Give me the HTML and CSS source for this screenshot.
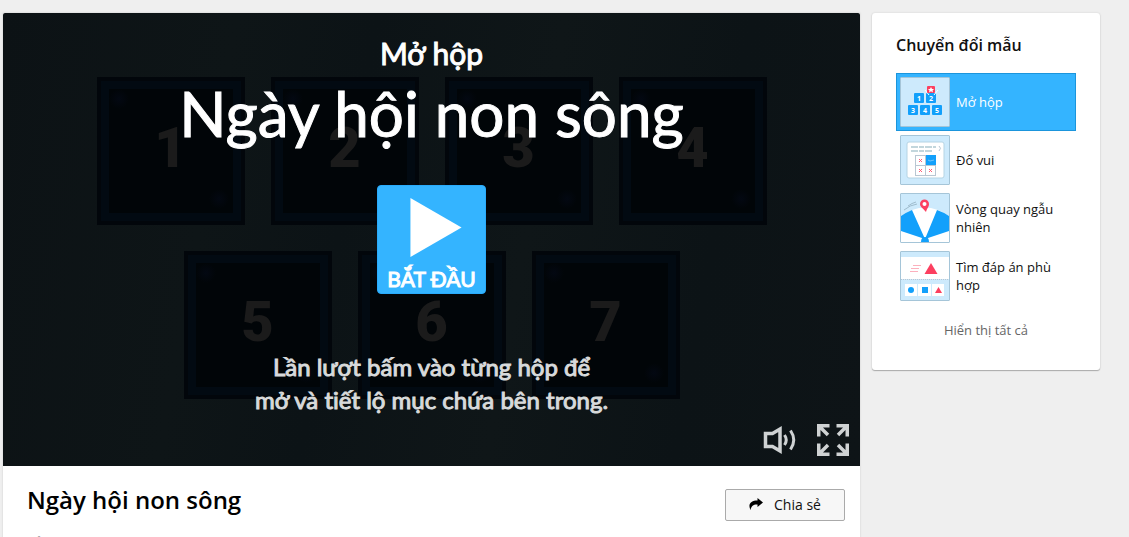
FILE: index.html
```
<!DOCTYPE html>
<html lang="vi">
  <head>
    <meta charset="UTF-8">
    <meta name="viewport" content="width=device-width, initial-scale=1.0">
    <title>Ngày hội non sông</title>
    <link rel="stylesheet" href="styles.css">
  </head>
  <body>
    <div class="page">
      <main class="activity">
        <section class="stage">
          <div class="boxes">
            <div class="box">1</div>
            <div class="box">2</div>
            <div class="box">3</div>
            <div class="box">4</div>
            <div class="box">5</div>
            <div class="box">6</div>
            <div class="box">7</div>
          </div>
          <div class="intro">
            <div class="template-name">Mở hộp</div>
            <div class="game-title">Ngày hội non sông</div>
            <button class="start" type="button">
              <svg width="52" height="60" viewBox="0 0 52 60"><path d="M0 0L52 30L0 60Z" fill="#fff"/></svg>
              <span>BẮT ĐẦU</span>
            </button>
            <p class="instruction">Lần lượt bấm vào từng hộp để<br>mở và tiết lộ mục chứa bên trong.</p>
          </div>
          <div class="controls">
            <button class="control" type="button" aria-label="Âm thanh">
              <svg width="34" height="32" viewBox="0 0 34 32" fill="none" stroke="#cfd2d3">
                <path d="M2.5 9.5H9.500L17 5V27L9.500 22.500H2.500Z" stroke-width="3.500"/>
                <path d="M21.500 11Q25 16 21.500 21M27.500 6.500Q34 16 27.500 25.500" stroke-width="3"/>
              </svg>
            </button>
            <button class="control" type="button" aria-label="Toàn màn hình">
              <svg width="32" height="32" viewBox="0 0 32 32" fill="none" stroke="#cfd2d3" stroke-width="3.500">
                <path d="M12.500 1.750H1.750V12.500M2 2L11 11"/>
                <path d="M19.500 1.750H30.250V12.500M30 2L21 11"/>
                <path d="M12.500 30.250H1.750V19.500M2 30L11 21"/>
                <path d="M19.500 30.250H30.250V19.500M30 30L21 21"/>
              </svg>
            </button>
          </div>
        </section>
        <section class="details">
          <div class="about">
            <h1>Ngày hội non sông</h1>
            <div class="author">bởi <a href="#">Vananh</a></div>
          </div>
          <button class="share" type="button">
            <svg width="14" height="12" viewBox="0 0 14 12"><path d="M8.500 0L14 4.500L8.500 9V6.500C4.500 6.300 2.500 7.500 1.500 12C-1.500 6 2 2.500 8.500 2.500Z" fill="#000"/></svg>
            Chia sẻ
          </button>
        </section>
      </main>

      <aside class="switcher">
        <h2>Chuyển đổi mẫu</h2>
        <nav class="templates">
          <a class="template selected" href="#">
            <svg class="thumb" viewBox="0 0 48 48">
              <rect width="48" height="48" fill="#cdeafc"/>
              <g fill="#12a0fb">
                <rect x="13" y="15" width="10" height="10" rx="1"/>
                <rect x="25" y="15" width="10" height="10" rx="1"/>
                <rect x="7" y="27" width="10" height="10" rx="1"/>
                <rect x="19" y="27" width="10" height="10" rx="1"/>
                <rect x="31" y="27" width="10" height="10" rx="1"/>
              </g>
              <path d="M24 12L28 17M37 12L33 17" stroke="#fff"/>
              <rect x="26" y="8" width="8" height="7" rx="1" fill="#fc3f5f"/>
              <path d="M30 9L31 11H33L31.500 12.500L32 14.500L30 13.300L28 14.500L28.500 12.500L27 11H29Z" fill="#fff"/>
              <g class="thumb-digits">
                <text x="18" y="23">1</text>
                <text x="30" y="23">2</text>
                <text x="12" y="35">3</text>
                <text x="24" y="35">4</text>
                <text x="36" y="35">5</text>
              </g>
            </svg>
            <span>Mở hộp</span>
          </a>
          <a class="template" href="#">
            <svg class="thumb" viewBox="0 0 48 48">
              <rect width="48" height="48" fill="#cdeafc"/>
              <rect x="6" y="6" width="37" height="36" rx="2" fill="#fff" stroke="#b5d4e4"/>
              <path d="M10 11H35M10 15H31" stroke="#c2d6dc" stroke-width="2" stroke-dasharray="7 1 5 1"/>
              <path d="M38 10Q41 12 38 15" stroke="#b9c7d3" fill="none"/>
              <rect x="14.500" y="19.500" width="20" height="20" fill="#fff" stroke="#b9c7d3"/>
              <path d="M24.500 20V39M15 29.500H34" stroke="#b9c7d3"/>
              <rect x="25" y="19" width="10" height="10" fill="#12a0fb"/>
              <path d="M27 24L29 25L33 24" stroke="#70c4fa" fill="none"/>
              <path d="M18 23L21 26M21 23L18 26M18 33L21 36M21 33L18 36M28 33L31 36M31 33L28 36" stroke="#fc5f78"/>
            </svg>
            <span>Đố vui</span>
          </a>
          <a class="template" href="#">
            <svg class="thumb" viewBox="0 0 48 48">
              <rect width="48" height="48" fill="#cdeafc"/>
              <path d="M0 22Q24 5 48 22V48H0Z" fill="#fff"/>
              <path d="M0 22Q6 18 11 16L24 45L0 37ZM48 22Q42 18 36 16L24 45L48 37Z" fill="#12a0fb"/>
              <path d="M20 48Q20 43 24 43Q28 43 28 48Z" fill="#12a0fb"/>
              <path d="M3 16Q9 11 16 10M7 12Q11 9 15 8" stroke="#9fbccd" fill="none"/>
              <path d="M25 18C22 14 19 13 19 10A4.500 4.500 0 0 1 28 10C28 13 26 14 25 18Z" fill="#fc3f5f"/>
              <circle cx="23.500" cy="10" r="2" fill="#fff"/>
            </svg>
            <span>Vòng quay ngẫu nhiên</span>
          </a>
          <a class="template" href="#">
            <svg class="thumb" viewBox="0 0 48 48">
              <rect width="48" height="48" fill="#cdeafc"/>
              <rect y="5" width="48" height="22" fill="#fff"/>
              <path d="M0 27.500H48" stroke="#b9c7d3" stroke-dasharray="1 1"/>
              <path d="M30 11L36.500 22H23.500Z" fill="#fc3f5f"/>
              <path d="M12 13.500H20M10 16.500H18M9 19.500H17" stroke="#fcb0bd"/>
              <path d="M4 32H16V44H4ZM17 32H30V44H17ZM31 32H43V44H31Z" fill="#fff"/>
              <circle cx="10" cy="38" r="3" fill="#12a0fb"/>
              <rect x="21" y="35" width="6" height="6" fill="#12a0fb"/>
              <path d="M37.500 35L41 41H34Z" fill="#fc3f5f"/>
            </svg>
            <span>Tìm đáp án phù hợp</span>
          </a>
        </nav>
        <a class="show-all" href="#">Hiển thị tất cả</a>
      </aside>
    </div>
  </body>
</html>
```
FILE: styles.css
```
* {
  box-sizing: border-box;
}
body {
  margin: 0;
  background-color: #efefef;
  font-family: "Open Sans", "Noto Sans", sans-serif;
  color: #111;
}
a {
  color: inherit;
  text-decoration: none;
}
button {
  font-family: inherit;
  cursor: pointer;
}
svg {
  display: block;
}
.page {
  display: flex;
  align-items: flex-start;
  gap: 12px;
  padding: 13px 29px 0 3px;
  height: 100vh;
  overflow: hidden;
}
.activity {
  flex: 1;
  background-color: #fff;
  box-shadow: 0 0 2px #ccc;
}

/* game area */
.stage {
  position: relative;
  display: grid;
  padding-bottom: 50px;
  background: linear-gradient(100deg, #0c1215, #0e1517 25%, #0c1316 40%, #0f1618 60%, #0c1316 80%, #0e1417);
  border-radius: 2px 2px 0 0;
}
.boxes,
.intro {
  grid-area: 1 / 1;
}
.boxes {
  display: flex;
  flex-wrap: wrap;
  justify-content: center;
  align-content: flex-start;
  gap: 26px;
  padding: 64px 90px 0;
}
.box {
  display: flex;
  align-items: center;
  justify-content: center;
  width: 148px;
  height: 148px;
  border: 4px solid #02060b;
  background:
    radial-gradient(circle at 18px 18px, #030812, transparent 10px),
    radial-gradient(circle at 118px 118px, #030812, transparent 10px),
    #010508;
  box-shadow: inset 0 0 0 8px #020a12;
  color: #1b1b1b;
  font-family: Roboto, sans-serif;
  font-size: 56px;
  font-weight: 900;
  line-height: 60px;
  padding-bottom: 6px;
}
.intro {
  z-index: 1;
  display: flex;
  flex-direction: column;
  align-items: center;
  padding-top: 20px;
  color: #fff;
  font-family: Lato, sans-serif;
  font-variant-ligatures: none;
  text-align: center;
  -webkit-text-stroke: 1px;
}
.template-name {
  font-size: 30px;
  line-height: 40px;
}
.game-title {
  font-size: 62px;
  line-height: 80px;
}
.start {
  display: flex;
  flex-direction: column;
  align-items: center;
  gap: 8px;
  width: 109px;
  height: 109px;
  margin-top: 32px;
  padding: 12px 0 0;
  border: 1px solid #29abfb;
  border-radius: 4px;
  background-color: #34b4ff;
  color: #fff;
  font-size: 21px;
  line-height: 28px;
}
.start svg {
  margin-left: 8px;
}
.instruction {
  margin: 56px 0 0;
  color: #d8dadb;
  font-size: 24px;
  line-height: 33px;
}
.controls {
  position: absolute;
  right: 11px;
  bottom: 10px;
  z-index: 2;
  display: flex;
  gap: 20px;
}
.control {
  padding: 0;
  border: 0;
  background: none;
}

/* title and share */
.details {
  display: flex;
  justify-content: space-between;
  align-items: flex-start;
  padding: 16px 15px 24px 24px;
}
.details h1 {
  margin: 0;
  color: #000;
  font-size: 24px;
  font-weight: 600;
  line-height: 36px;
}
.author {
  margin-top: 14px;
  color: #777;
  font-size: 13px;
  line-height: 20px;
}
.author a {
  color: #1483c4;
}
.share {
  display: flex;
  align-items: center;
  justify-content: center;
  gap: 11px;
  width: 120px;
  height: 32px;
  margin-top: 7px;
  padding: 0 0 2px;
  border: 1px solid #aaa;
  border-radius: 2px;
  background-color: #f7f7f7;
  color: #111;
  font-size: 14px;
}

/* template list */
.switcher {
  width: 228px;
  padding: 20px 24px 30px;
  border-radius: 3px;
  background-color: #fff;
  box-shadow: 0 1px 1px #aaa, 0 0 2px #ccc;
}
.switcher h2 {
  margin: 0 0 16px;
  font-size: 16px;
  font-weight: 600;
  line-height: 24px;
}
.template {
  display: flex;
  align-items: center;
  gap: 6px;
  height: 58px;
  padding: 0 10px 0 3px;
  border: 1px solid transparent;
  font-size: 13px;
  line-height: 18px;
}
.template.selected {
  border-color: #1b95dc;
  background-color: #34b4ff;
  color: #fff;
}
.thumb {
  flex: none;
  width: 50px;
  height: 50px;
  border: 1px solid #a5c5d8;
  border-radius: 1px;
}
.thumb-digits {
  fill: #fff;
  font-size: 7px;
  font-weight: 700;
  text-anchor: middle;
}
.show-all {
  display: block;
  margin-top: 15px;
  color: #666;
  font-size: 13px;
  line-height: 20px;
  text-align: center;
}
```
